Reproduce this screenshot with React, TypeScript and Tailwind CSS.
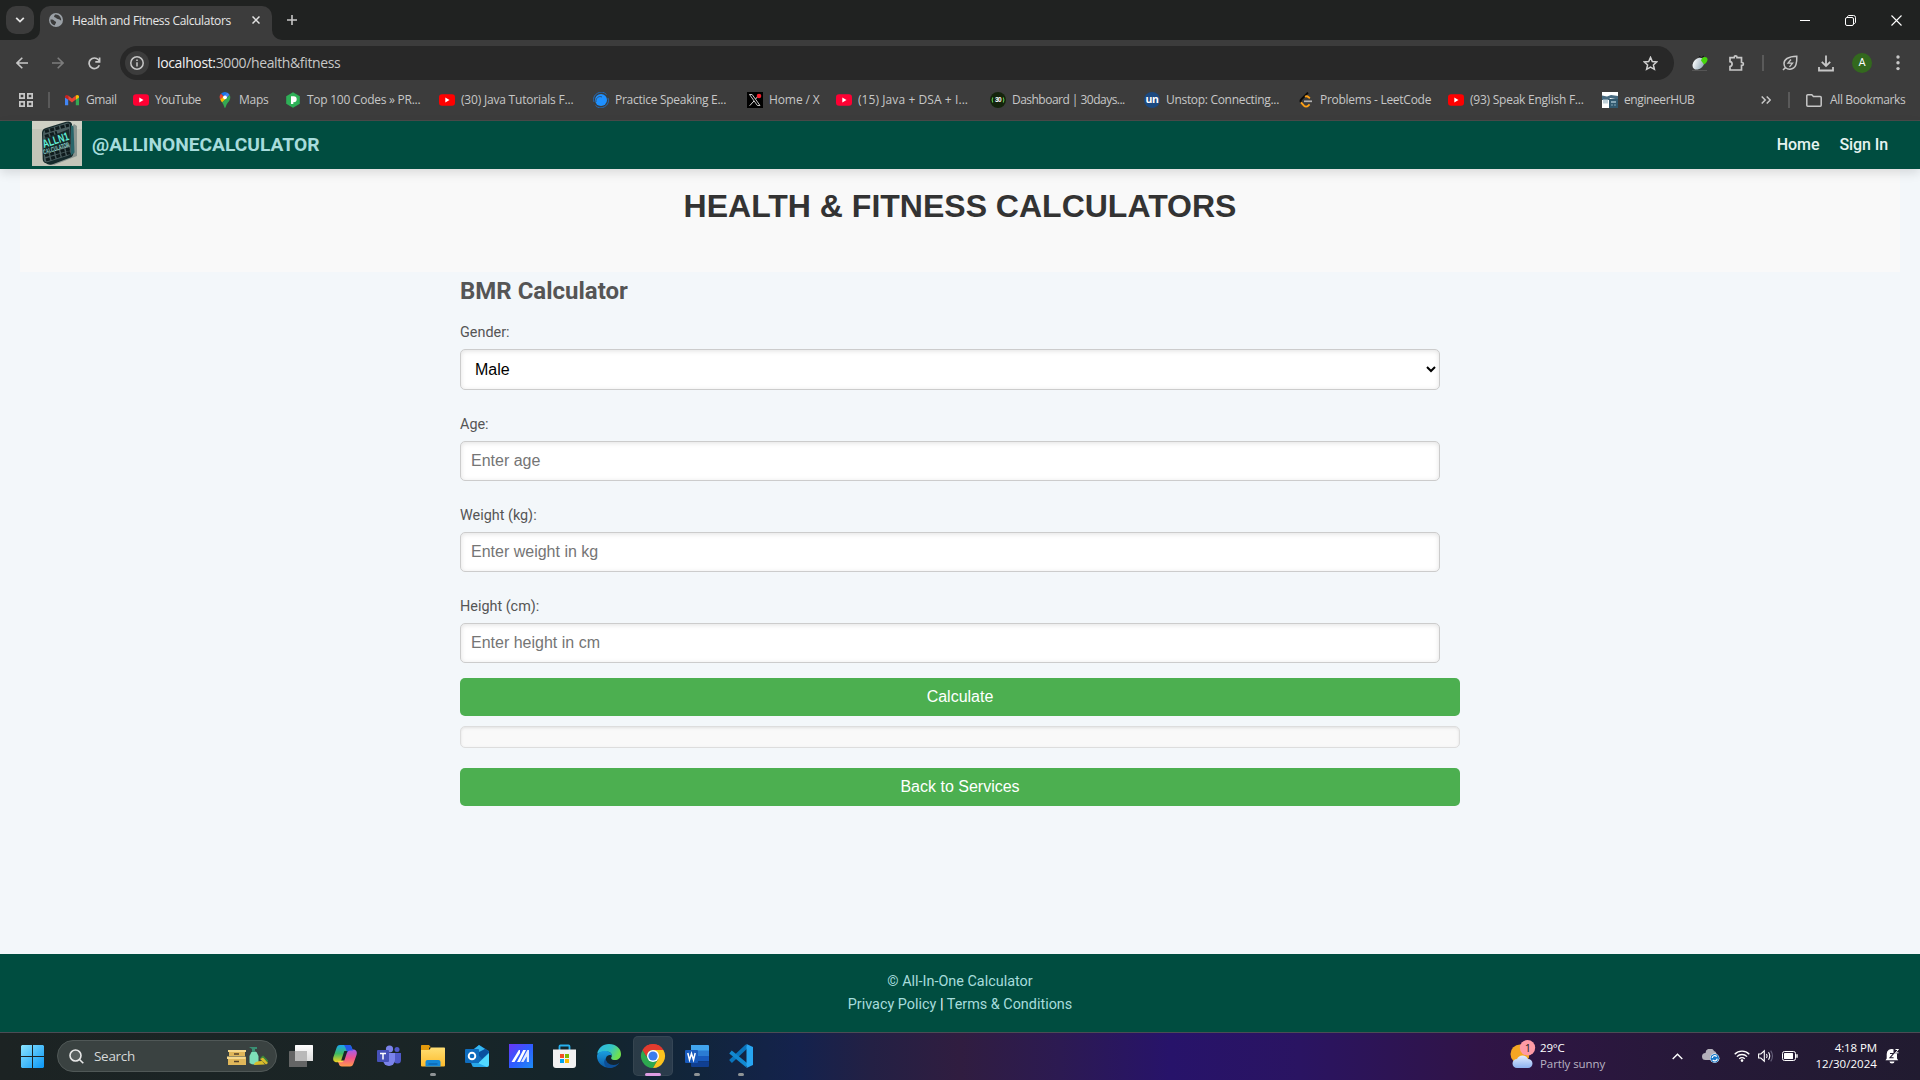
import React from "react";

const SEGOE = "font-['Open_Sans','Noto_Sans',sans-serif]";

const YouTube = ({ color = "#ff0033" }: { color?: string }) => (
  <svg width="16" height="16" viewBox="0 0 16 16">
    <rect y="2.2" width="16" height="11.6" rx="3" fill={color} />
    <path d="M6.3 5.6v4.8l4.2-2.4z" fill="#fff" />
  </svg>
);
const YouTubeRed = () => <YouTube color="#ff0000" />;

const Gmail = () => (
  <svg width="16" height="16" viewBox="0 0 16 16">
    <path d="M1 5v8.2h3.2V7.2z" fill="#4285f4" />
    <path d="M15 5v8.2h-3.2V7.2z" fill="#34a853" />
    <path d="M4.2 3.6 8 6.6l3.8-3v4L8 10.6l-3.8-3z" fill="#ea4335" />
    <path d="M11.8 3.6c1.4-1.2 3.2-.4 3.2 1.2v.6l-3.2 2.4z" fill="#fbbc04" />
    <path d="M4.2 3.6C2.8 2.400 1 3.200 1 4.800v.6l3.200 2.400z" fill="#c5221f" />
  </svg>
);

const MapsPin = () => (
  <svg width="16" height="16" viewBox="0 0 16 16">
    <path d="M8 0a5.300 5.300 0 0 0-4 1.800l3 2.600L10 .4A6 6 0 0 0 8 0z" fill="#1a73e8" />
    <path d="M4 1.800A5.300 5.300 0 0 0 3.200 7.600L6.500 4.200z" fill="#ea4335" />
    <path d="M10 .4 6.500 4.500l2.800 2.300 3.200-4A5.200 5.200 0 0 0 10 .4z" fill="#4285f4" />
    <path d="M3.200 7.600c.5 1 1.200 1.900 1.900 2.800L9.500 6.600 6.600 4.300z" fill="#fbbc04" />
    <path d="M12.700 2.900 5.100 10.600C7 13 7.200 16 8 16s1-3 2.900-5.400C12.400 8.700 14.300 6 12.700 2.900z" fill="#34a853" />
    <circle cx="8" cy="5.300" r="1.900" fill="#fff" />
  </svg>
);

const PrepCode = () => (
  <svg width="16" height="16" viewBox="0 0 16 16">
    <path d="M8 .3l6.800 3.900v7.600L8 15.700l-6.800-3.900V4.200z" fill="#2eb057" />
    <path d="M6 4.200h2.700a3 3 0 0 1 0 6H8.300v1.800H6z" fill="#fff" />
  </svg>
);

const Swirl = () => (
  <svg width="16" height="16" viewBox="0 0 16 16">
    <circle cx="8" cy="8" r="6" fill="#1e90ff" />
    <path d="M13.500 2.500A7.500 7.500 0 0 0 1 10M2.500 13.500A7.500 7.500 0 0 0 15 6" fill="none" stroke="#2369b5" strokeWidth="1" />
    <path d="M3 10C2.500 6 6 3.500 9 5" fill="none" stroke="#3c3c3c" strokeWidth=".7" />
  </svg>
);

const XLogo = () => (
  <svg width="16" height="16" viewBox="0 0 16 16">
    <rect width="16" height="16" fill="#000" />
    <path d="M2.500 2.500h2.600l7.900 11h-2.600z" fill="none" stroke="#ddd" strokeWidth=".9" />
    <path d="M12.500 2.500 8.600 7M7 9l-4.300 4.700" stroke="#ddd" strokeWidth="1" />
    <circle cx="12" cy="4" r="2.300" fill="#f4212e" />
  </svg>
);

const Days30 = () => (
  <svg width="16" height="16" viewBox="0 0 16 16">
    <circle cx="8" cy="8" r="8" fill="#14240c" />
    <path d="M2.800 5.500q-1.300 2.500 0 5M13.200 5.500q1.300 2.500 0 5" fill="none" stroke="#58b947" strokeWidth="1.200" />
    <text x="8" y="10.300" fontSize="6.500" fontWeight="700" textAnchor="middle" fill="#fff" fontFamily="Liberation Sans, sans-serif">30</text>
  </svg>
);

const Unstop = () => (
  <svg width="16" height="16" viewBox="0 0 16 16">
    <circle cx="8" cy="8" r="8" fill="#1c4980" />
    <text x="8" y="11" fontSize="10.500" fontWeight="700" textAnchor="middle" fill="#fff" fontFamily="Open Sans, sans-serif">un</text>
  </svg>
);

const LeetCode = () => (
  <svg width="16" height="16" viewBox="0 0 16 16" fill="none">
    <path d="M10 .6 3.200 7.500a2.200 2.200 0 0 0-.2 2.800" stroke="#0a0a0a" strokeWidth="1.900" />
    <path d="M3 10.300l2.900 3.300c1.200 1.300 3.200 1.300 4.400 0l1.300-1.300M7 4.800c1.200-.7 2.600-.5 3.600.4l1.200 1.200" stroke="#ffa116" strokeWidth="1.900" />
    <path d="M6 9.300h8" stroke="#b3b3b3" strokeWidth="1.700" />
  </svg>
);

const EngineerHub = () => (
  <svg width="16" height="16" viewBox="0 0 16 16">
    <rect width="16" height="16" fill="#fff" />
    <path d="M0 3.500l5 1 4-1.500 7 1v3.500L8 6l-1 2H0z" fill="#466a80" />
    <rect x="7" y="7" width="9" height="9" fill="#31596f" />
    <path d="M1 7.500h5v4H1z" fill="#bfd0d8" />
    <path d="M9 9h5v2H9zM9 12.500h2v1H9zM12 12.500h2v1h-2z" fill="#86a5b5" />
  </svg>
);

const bookmarks = [
  { w: "w-[69px]", t: "Gmail", ls: "tracking-[-0.400px]", I: Gmail },
  { w: "w-[84px]", t: "YouTube", ls: "tracking-[-0.500px]", I: YouTube },
  { w: "w-[68px]", t: "Maps", ls: "tracking-[-0.250px]", I: MapsPin },
  { w: "w-[154px]", t: "Top 100 Codes » PR...", ls: "tracking-[-0.260px]", I: PrepCode },
  { w: "w-[154px]", t: "(30) Java Tutorials F...", ls: "tracking-[-0.200px]", I: YouTubeRed },
  { w: "w-[154px]", t: "Practice Speaking E...", ls: "tracking-[-0.280px]", I: Swirl },
  { w: "w-[89px]", t: "Home / X", ls: "tracking-[-0.100px]", I: XLogo },
  { w: "w-[154px]", t: "(15) Java + DSA + I...", ls: "tracking-[0.080px]", I: YouTube },
  { w: "w-[154px]", t: "Dashboard | 30days...", ls: "tracking-[-0.520px]", I: Days30 },
  { w: "w-[154px]", t: "Unstop: Connecting...", ls: "tracking-[-0.310px]", I: Unstop },
  { w: "w-[150px]", t: "Problems - LeetCode", ls: "tracking-[-0.270px]", I: LeetCode },
  { w: "w-[154px]", t: "(93) Speak English F...", ls: "tracking-[-0.240px]", I: YouTubeRed },
  { w: "w-[100px]", t: "engineerHUB", ls: "tracking-[-0.400px]", I: EngineerHub },
];

const TabStrip = () => (
  <div className="flex h-10 shrink-0 items-start bg-[#202221]">
    <button className="mt-1.5 ml-1.5 grid h-7 w-7 place-items-center rounded-[10px] bg-[#3c3c3c]">
      <svg width="10" height="6" viewBox="0 0 10 6" fill="none" stroke="#e3e3e3" strokeWidth="1.800"><path d="M1.200 .8 5 4.600 8.800 .8" /></svg>
    </button>
    <div className="relative mt-1.5 ml-1.5 flex h-[34px] w-[232px] items-center rounded-t-[10px] bg-[#3c3c3c] pb-[6px] pl-[9px]">
      <svg className="absolute bottom-0 -left-2.5" width="10" height="10"><path d="M10 0v10H0A10 10 0 0 0 10 0z" fill="#3c3c3c" /></svg>
      <svg className="absolute -right-2.5 bottom-0" width="10" height="10"><path d="M0 0v10h10A10 10 0 0 1 0 0z" fill="#3c3c3c" /></svg>
      <svg width="14" height="14" viewBox="0 0 14 14">
        <circle cx="7" cy="7" r="7" fill="#9aa0a6" />
        <path d="M1.500 6.500c1.500-.3 3 .2 3.800 1.200.7.900 1.800.5 1.800 1.700 0 .9-1 1-1.200 2.800C3.200 12 1.200 9.500 1.500 6.500zM6 1.600c2.400-.3 4.400.8 5.500 2.800.6 1 .8 2 .6 3-1-.1-1.300-1.200-2.400-1.200-1.400 0-1.700-.6-2.600-1.200C6.200 4.400 5 4.300 5 3.300c0-.8 1-.8 1-1.700z" fill="#3c3c3c" />
      </svg>
      <span className={`mt-[2px] ml-[9px] text-[12px] tracking-[-0.330px] whitespace-nowrap text-[#e6e6e6] ${SEGOE}`}>Health and Fitness Calculators</span>
      <svg className="absolute top-[10px] left-[212px]" width="8" height="8" viewBox="0 0 8 8" stroke="#e3e3e3" strokeWidth="1.500"><path d="M.5 .5l7 7M7.500 .5l-7 7" /></svg>
    </div>
    <svg className="mt-[15px] ml-[15px]" width="10" height="10" stroke="#c7c7c7" strokeWidth="1.600"><path d="M5 0v10M0 5h10" /></svg>
    <div className="mr-[18px] ml-auto flex items-center gap-[35px] pt-[15px]">
      <svg width="10" height="11" stroke="#fff"><path d="M0 5.500h10" /></svg>
      <svg width="11" height="11" fill="none" stroke="#fff" viewBox="0 0 11 11"><rect x=".5" y="2.500" width="8" height="8" rx="1.500" /><path d="M2.500 2.500V2C2.500 1 3 .5 4 .5h4.500a2 2 0 0 1 2 2V7c0 1-.5 1.500-1.500 1.500h-.5" /></svg>
      <svg width="11" height="11" stroke="#fff" strokeWidth="1.100"><path d="M.5 .5l10 10M10.500 .5l-10 10" /></svg>
    </div>
  </div>
);

const Toolbar = () => (
  <div className="flex h-[46px] shrink-0 items-center bg-[#3c3c3c]">
    <svg className="ml-4" width="12" height="12" viewBox="0 0 12 12" fill="none" stroke="#c7c7c7" strokeWidth="1.600"><path d="M12 6H1M6.300 .700 1 6l5.300 5.300" /></svg>
    <svg className="ml-[24px]" width="12" height="12" viewBox="0 0 12 12" fill="none" stroke="#7c7c7c" strokeWidth="1.600"><path d="M0 6h11M5.700 .700 11 6l-5.300 5.300" /></svg>
    <svg className="ml-[24px]" width="13" height="13" viewBox="0 0 13 13" fill="none" stroke="#c7c7c7" strokeWidth="1.700"><path d="M11.300 8.300A5.300 5.300 0 1 1 10.400 2.800L11.500 4" /><path d="M11.600 .500v4.300H7.300" /></svg>
    <div className="ml-[19px] flex h-[34px] w-[1554px] items-center rounded-full bg-[#282828] pl-[5px]">
      <div className="grid h-6 w-6 place-items-center rounded-full bg-[#3c3c3c]">
        <svg width="14" height="14" fill="none" stroke="#c7c7c7" strokeWidth="1.500"><circle cx="7" cy="7" r="6.200" /><path d="M7 6.300V10.500M7 3.500V5" /></svg>
      </div>
      <span className={`-mt-px ml-2 text-[14px] tracking-[-0.370px] whitespace-nowrap text-[#c7c7c7] ${SEGOE}`}><span className="text-[#f1f1f1]">localhost:</span>3000/health&amp;fitness</span>
      <svg className="mr-[16px] ml-auto" width="15" height="15" viewBox="0 0 15 15" fill="none" stroke="#d0d0d0" strokeWidth="1.500"><path d="M7.500 1.400l1.800 4.100 4.500.4-3.400 3 1 4.400-3.900-2.300-3.900 2.300 1-4.400-3.400-3 4.500-.4z" /></svg>
    </div>
    <svg className="ml-[18px]" width="16" height="16" viewBox="0 0 16 16">
      <defs><linearGradient id="mouse" x1=".2" x2=".8" y2="1"><stop stopColor="#fff" /><stop offset="1" stopColor="#8fa6b4" /></linearGradient></defs>
      <ellipse cx="6.500" cy="8.600" rx="6.800" ry="5" transform="rotate(-45 6.500 8.600)" fill="url(#mouse)" />
      <path d="M10 3c3-2 6-.500 5.500 2-.5 2-2 3.500-3.500 4.500L9 5.500z" fill="#46d60c" />
      <path d="M7 1.500l2.500 1L12 1" stroke="#111" fill="none" />
      <path d="M0 15.500h15" stroke="#555" />
    </svg>
    <svg className="ml-5" width="17" height="17" viewBox="0 0 17 17" fill="none" stroke="#c7c7c7" strokeWidth="1.700"><path d="M2 2.700h4.200V2.300a1.400 1.400 0 0 1 2.800 0v.4h4.500V7.500h.5a1.400 1.400 0 0 1 0 2.800h-.500v4.700H2v-3.500c2.800-.2 2.800-4.600 0-4.800z" /></svg>
    <div className="ml-[17px] h-4 w-0.5 bg-[#5a5a5a]" />
    <svg className="ml-[18px]" width="16" height="16" viewBox="0 0 16 16" fill="none" stroke="#c7c7c7" strokeWidth="1.500"><path d="M14.800 1.200C15 7 14.500 14 8 14.200 4.500 14.300 2 12 2 8.500 2 3 8 1.500 14.800 1.200zM1 15l2.600-2.600" /><path d="M9 4.500 6 8.200h4.500L7.500 11.800" strokeWidth="1.300" /></svg>
    <svg className="ml-[20px]" width="16" height="17" viewBox="0 0 16 17" fill="none" stroke="#c7c7c7" strokeWidth="1.800"><path d="M8 .500v10M3.800 6.800 8 11l4.200-4.200M1 12v3.500h14V12" /></svg>
    <div className="ml-[18px] grid h-5 w-5 place-items-center rounded-full bg-[#33691e] font-['Roboto',sans-serif] text-[11px] text-white">A</div>
    <svg className="ml-[24px]" width="4" height="16" fill="#c7c7c7"><circle cx="2" cy="2" r="1.700" /><circle cx="2" cy="7.800" r="1.700" /><circle cx="2" cy="13.600" r="1.700" /></svg>
  </div>
);

const Bookmarks = () => (
  <div className={`flex h-[35px] shrink-0 items-center border-b border-[#4a4a4a] bg-[#3c3c3c] pb-[6px] text-[12px] text-[#c7c7c7] ${SEGOE}`}>
    <svg className="ml-[19px]" width="14" height="14" fill="none" stroke="#c7c7c7" strokeWidth="1.700"><path d="M.850 .850h4.300v4.300H.850zM8.850 .850h4.300v4.300h-4.300zM.850 8.850h4.300v4.300H.850zM8.850 8.850h4.300v4.300h-4.300z" /></svg>
    <div className="mr-[14px] ml-[15px] h-4 w-0.5 bg-[#5a5a5a]" />
    {bookmarks.map(({ w, t, ls, I }) => (
      <div key={t} className={`flex shrink-0 items-center gap-1.5 whitespace-nowrap ${w} ${ls}`}><I /><span>{t}</span></div>
    ))}
    <svg className="ml-[59px]" width="10" height="8" viewBox="0 0 10 8" fill="none" stroke="#c7c7c7" strokeWidth="1.500"><path d="M.700 .500 4.200 4 .700 7.500M5.700 .500 9.200 4 5.700 7.500" /></svg>
    <div className="ml-[17px] h-4 w-0.5 bg-[#5a5a5a]" />
    <svg className="ml-4" width="16" height="13" viewBox="0 0 16 13" fill="none" stroke="#c7c7c7" strokeWidth="1.500"><path d="M.800 1.800a1 1 0 0 1 1-1h4l1.600 1.700h6.800a1 1 0 0 1 1 1v7.700a1 1 0 0 1-1 1H1.800a1 1 0 0 1-1-1z" /></svg>
    <span className="ml-2 tracking-[-0.360px] whitespace-nowrap">All Bookmarks</span>
  </div>
);

const Logo = () => (
  <svg width="50" height="45" viewBox="0 0 50 45" className="overflow-visible">
    <rect width="50" height="45" fill="#c3c5b9" />
    <rect width="50" height="8" fill="#cfd0c5" />
    <path d="M42 3l3 2v30L22 44l-8-2z" fill="#8a9590" />
    <path d="M10 12q0-4 4-5L34 .8q5-1.200 6 2.500l1.500 28q0 4-3 5.200L20 43.500q-4 .8-6-1.200-3.200-1-3.300-4z" fill="#15292b" />
    <path d="M11 13q0-4 4-5L34 2q4-1 4 3l1 25q0 4-4 5L16 41q-4 1-4-3z" fill="#4a5d5f" />
    <path d="M39 4l2.500 1.500 1 26-3.500 3z" fill="#27656a" />
    <g stroke="#0f1b1d" strokeWidth="3.200" strokeDasharray="4 1.400"><path d="M13 10.500 37 4M13 15.500l12-4M13 34.500l26-7M14 39l24-7.500" /></g>
    <path d="M12 18 37 8l1.500 15L12 34z" fill="#17282a" />
    <g fontFamily="Liberation Sans, sans-serif" fontWeight="700">
      <text x="12" y="27" fontSize="11.500" fill="#62f0d9" textLength="27" lengthAdjust="spacingAndGlyphs" transform="rotate(-18 12 27)">ALLN1</text>
      <text x="12" y="33.500" fontSize="7" fill="#8ccfc5" textLength="27" lengthAdjust="spacingAndGlyphs" transform="rotate(-17 12 33.500)">CALCULATOR</text>
    </g>
  </svg>
);

const fieldBox = "block w-[980px] rounded-[5px] border border-[#ccc] bg-white font-['Liberation_Sans',Arial,sans-serif] text-[16px] shadow-[inset_0_1px_5px_rgba(0,0,0,0.12)] outline-none";
const labelBox = "block font-['Roboto',sans-serif] text-[14.400px] leading-[18px] text-[#555]";
const buttonBox = "block h-[38px] w-full rounded-[5px] bg-[#4caf50] font-['Liberation_Sans',Arial,sans-serif] text-[16px] leading-[38px] text-white";

const Field = ({ label, hint }: { label: string; hint: string }) => (
  <div className="mt-[26px]">
    <label className={labelBox}>{label}</label>
    <input placeholder={hint} className={`mt-[7px] h-[40px] px-2.5 placeholder:text-[#757575] ${fieldBox}`} />
  </div>
);

const WebPage = () => (
  <main className="flex h-[911px] shrink-0 flex-col bg-[#f3f7fa]">
    <header className="z-10 flex h-12 shrink-0 items-start bg-[#004d40] pl-8 font-['Roboto',sans-serif] shadow-[0_4px_10px_rgba(0,0,0,0.12)]">
      <Logo />
      <span className="ml-[10px] text-[19.200px] leading-[47px] font-bold text-[#a7dcdc]">@ALLINONECALCULATOR</span>
      <nav className="mr-8 ml-auto flex gap-5 text-[16px] leading-[47px] font-medium tracking-[-0.080px] text-[#e6f3f0]">
        <a>Home</a>
        <a>Sign In</a>
      </nav>
    </header>
    <section className="mx-5 h-[103px] shrink-0 bg-[#f9f9f9] pt-[18px] text-center">
      <h1 className="font-['Liberation_Sans',Arial,sans-serif] text-[32px] leading-[38px] font-bold text-[#333]">HEALTH &amp; FITNESS CALCULATORS</h1>
    </section>
    <section className="mx-auto flex w-[1000px] grow flex-col">
      <h2 className="mt-[4px] font-['Roboto',sans-serif] text-[24px] leading-[30px] font-bold text-[#555]">BMR Calculator</h2>
      <label className={`mt-[18px] ${labelBox}`}>Gender:</label>
      <select className={`mt-[7px] h-[41px] px-2.5 text-black ${fieldBox}`}><option>Male</option></select>
      <Field label="Age:" hint="Enter age" />
      <Field label="Weight (kg):" hint="Enter weight in kg" />
      <Field label="Height (cm):" hint="Enter height in cm" />
      <button className={`mt-[15px] ${buttonBox}`}>Calculate</button>
      <div className="mt-[10px] h-[22px] rounded-[5px] border border-[#ddd] bg-[#f9f9f9] shadow-[inset_0_1px_3px_rgba(0,0,0,0.1)]" />
      <button className={`mt-[20px] ${buttonBox}`}>Back to Services</button>
    </section>
    <footer className="h-[78px] shrink-0 bg-[#004d40] pt-[16px] text-center font-['Roboto',sans-serif] text-[14.400px] leading-[23px] text-[#a7dcdc]">
      <p>© All-In-One Calculator</p>
      <p>Privacy Policy <span className="text-white">|</span> Terms &amp; Conditions</p>
    </footer>
  </main>
);

const apps: { name: string; dot?: string; active?: boolean; art: React.ReactNode }[] = [
  { name: "taskview", art: <><defs><linearGradient id="tv" x2="0" y2="1"><stop stopColor="#fff" /><stop offset="1" stopColor="#dcdcdc" /></linearGradient></defs><rect x="6" y="1" width="18" height="16" rx=".5" fill="url(#tv)" /><rect y="7" width="18" height="16" rx=".5" fill="#6e6e6e" fillOpacity=".88" /><rect x="6" y="7" width="12" height="10" fill="#b9b9b9" /></> },
  { name: "copilot", art: <><defs><linearGradient id="ca" x2="0" y2="1"><stop stopColor="#1aa5f0" /><stop offset=".5" stopColor="#3dbb63" /><stop offset="1" stopColor="#f5d21e" /></linearGradient><linearGradient id="cb" x2="0" y2="1"><stop stopColor="#a25ef0" /><stop offset=".5" stopColor="#f0528e" /><stop offset="1" stopColor="#ff9a4a" /></linearGradient></defs><path d="M7 1h9c2 0 2.500 1.500 3 3l.800 2.500h-2.500c-2 0-2.800 1-3.300 2.800L11.500 16c-.5 1.500-1.500 2.300-3 2.300H4c-3.500 0-4.500-2.500-3.500-5.500L3.500 4C4.200 2 5 1 7 1z" fill="url(#ca)" /><path d="M17 22.500H9c-2 0-2.800-1-3.300-3L5 17h2.800c1.800 0 2.500-1 3-2.500l2.500-7c.5-1.300 1.500-2 3-2H20c3.500 0 4.500 2.500 3.500 5.500l-3 8.500c-.7 2-1.500 3-3.500 3z" fill="url(#cb)" /><path d="M11 1h5c2 0 2.500 1.500 3 3l.8 2.500h-2.500c-2 0-2.800 1-3.300 2.800C13 5 12.500 3 11 1z" fill="#2456e8" /><path d="M13.500 8.500 10.500 17c-.5 1-1 1.300-2 1.300H5l.2-1.300h2.600c1.800 0 2.500-1 3-2.500z" fill="#ffd54a" /><path d="M11.300 7h3.200l-3.200 9.500H8.200z" fill="#182626" /></> },
  { name: "teams", art: <><circle cx="12.500" cy="5" r="3.600" fill="#7b83eb" /><circle cx="20" cy="5.500" r="2.500" fill="#5059c9" /><path d="M17 9h7v7a3.500 3.500 0 0 1-7 0z" fill="#5059c9" /><path d="M6 9h12v7a6 6 0 0 1-12 0z" fill="#7b83eb" /><rect y="6" width="12" height="12" rx="1" fill="#4651b8" /><path d="M3 9.500h6M6 9.500v6" stroke="#fff" strokeWidth="1.500" /></> },
  { name: "explorer", dot: "y", art: <><defs><linearGradient id="fe" x2="0" y2="1"><stop stopColor="#ffdf73" /><stop offset="1" stopColor="#fdbb2c" /></linearGradient></defs><path d="M0 2c0-.6.400-1 1-1h7l2 2.500h-2V7H0z" fill="#e39a0c" /><path d="M0 6h8l2.200-2.500H23c.600 0 1 .4 1 1V21.500a1 1 0 0 1-1 1H1a1 1 0 0 1-1-1z" fill="url(#fe)" /><path d="M4.500 22.500V18a2 2 0 0 1 2-2h11a2 2 0 0 1 2 2v4.500z" fill="#1488d8" /><path d="M7.500 20h9" stroke="#0b64ad" strokeWidth="1.300" /></> },
  { name: "outlook", art: <><path d="M6 7 14 1l10 6v13l-2 3H10l-4-3z" fill="#1066b5" /><path d="M8 6l6-5 6 4-5 4z" fill="#35b8f1" /><path d="M12 9l8-4 4 3-7 7z" fill="#0a4f9e" /><path d="M24 9v12a2 2 0 0 1-2 2H9z" fill="#50d9ff" /><path d="M6 16l16 7H9a2 2 0 0 1-2-2z" fill="#28a8ea" /><rect y="5" width="14" height="14" rx="1" fill="#0f6cbd" /><circle cx="7" cy="12" r="3.300" fill="none" stroke="#fff" strokeWidth="1.900" /></> },
  { name: "myasus", art: <><defs><linearGradient id="ma" x2="1" y2="1"><stop stopColor="#6a35f5" /><stop offset=".5" stopColor="#2f5bff" /><stop offset="1" stopColor="#1c8df5" /></linearGradient></defs><rect width="24" height="24" fill="url(#ma)" /><path d="M2.500 18h3l5.500-9V6H9.800zM8 18h3l6-12h-2.800z" fill="#fff" /><path d="M12 18h2.500l3.300-5.500V18H20V6h-1.600z" fill="#e3eaff" /></> },
  { name: "store", art: <><path d="M6.500 6V2.500c0-.5.300-1 1-1h8c.7 0 1 .5 1 1V6" fill="none" stroke="#27b0ee" strokeWidth="1.800" /><path d="M0 5.500h23V21a3 3 0 0 1-3 3H3a3 3 0 0 1-3-3z" fill="#f2f2f2" /><path d="M7 10h4v4H7z" fill="#f25022" /><path d="M12 10h4v4h-4z" fill="#7fba00" /><path d="M7 15h4v4H7z" fill="#00a4ef" /><path d="M12 15h4v4h-4z" fill="#ffb900" /></> },
  { name: "edge", art: <><defs><linearGradient id="ea" x2="1" y2=".4"><stop stopColor="#2bb7e8" /><stop offset=".6" stopColor="#35c5c4" /><stop offset="1" stopColor="#6fe04f" /></linearGradient><linearGradient id="eb" x2="0" y2="1"><stop stopColor="#1a9fe0" /><stop offset="1" stopColor="#0c59a4" /></linearGradient></defs><path d="M.2 10C1 4 6 0 12 0c7 0 12 4.500 12 10 0 4-3 6-6 6-3.500 0-4.500-1.500-3.500-3C15.800 11 14 7.500 9.500 7.500 5 7.500 1 9 .2 10z" fill="url(#ea)" /><path d="M0 12C0 9 4 7 8 7c4.500 0 7 2.500 7 5-1-1.500-5-1.500-6 2-1 4 3 8.500 7 9.300C8 25.500 0 20 0 12z" fill="url(#eb)" /><path d="M9 14c-.8 4 3.500 7 7.500 7 3 0 5-1.500 6-2.500C21 21.500 17 24 13 24c-5 0-8-6-4-10z" fill="#0d4f96" /></> },
  { name: "chrome", active: true, art: <><path d="M12 12 1.600 6A12 12 0 0 1 22.400 6z" fill="#e33b2e" /><path d="M1.600 6A12 12 0 0 0 12 24l5.200-9L6.800 15z" fill="#2da94f" /><path d="M22.400 6A12 12 0 0 1 12 24l5.200-9L12 6z" fill="#fcc31e" /><path d="M1.600 6l5.200 9h5V6z" fill="#2da94f" /><path d="M1.600 6A12 12 0 0 1 22.400 6H12a6 6 0 0 0-5.200 3.200L5.500 12.500z" fill="#e33b2e" /><circle cx="12" cy="12" r="6" fill="#fff" /><circle cx="12" cy="12" r="4.600" fill="#3b7ded" /></> },
  { name: "word", dot: "y", art: <><path d="M6 1h17a1 1 0 0 1 1 1v5H6z" fill="#41a5ee" /><path d="M6 6.500h18V12H6z" fill="#2b7cd3" /><path d="M6 12h18v5.300H6z" fill="#185abd" /><path d="M6 17.300h18V22a1 1 0 0 1-1 1H7a1 1 0 0 1-1-1z" fill="#103f91" /><rect y="6" width="13" height="13" rx="1" fill="#185abd" /><path d="M2.800 9l1.700 7 2-6.500 2 6.500 1.700-7" fill="none" stroke="#fff" strokeWidth="1.500" /></> },
  { name: "vscode", dot: "y", art: <><path d="M1.500 17.500 18 2" stroke="#0a74bd" strokeWidth="4" /><path d="M1.500 8 18 21.500" stroke="#1288d0" strokeWidth="4" /><path d="M17.500 0 24 3v18l-6.500 3z" fill="#27a5f2" /></> },
];

const Taskbar = () => (
  <div className={`flex h-12 shrink-0 items-center border-t border-[#4b4c55] bg-[linear-gradient(90deg,#1c2323_0px,#1a2526_400px,#14252b_580px,#11253c_700px,#14224d_800px,#232044_870px,#301d40_960px,#2c1a52_1060px,#27136a_1170px,#2a1462_1300px,#301446_1480px,#261938_1700px,#211b30_1920px)] pb-px text-white ${SEGOE}`}>
    <svg className="ml-[21px]" width="23" height="23" viewBox="0 0 23 23">
      <defs><linearGradient id="win" x2="1" y2="1"><stop stopColor="#8ae4ff" /><stop offset="1" stopColor="#0a96f5" /></linearGradient></defs>
      <path d="M1 0h10v11H0V1zM12 0h10l1 1v10H12zM0 12h11v11H1l-1-1zM12 12h11v10l-1 1H12z" fill="url(#win)" />
    </svg>
    <div className="ml-[13px] flex h-8 w-[220px] items-center rounded-full border border-[#505857] bg-[#3a4241] pl-[11px]">
      <svg width="15" height="15" fill="#59605f" stroke="#e8e8e8" strokeWidth="1.600"><circle cx="6.500" cy="6.500" r="5.500" /><path d="M10.500 10.500 14.300 14.300" /></svg>
      <span className="ml-[10px] text-[13.500px] tracking-[-0.300px] text-[#d5d8d8]">Search</span>
      <svg className="mr-2 ml-auto" width="41" height="20" viewBox="0 0 41 20">
        <path d="M2 4h16v6H2zM1 11h18v8H1z" fill="#e0b75a" /><path d="M1 4h18v2H1zM0 10.500h18.500V13H0z" fill="#f6d98c" /><path d="M7 8h5M7 15.500h5" stroke="#55422a" strokeWidth="1.500" />
        <path d="M24 7c0-2 6-2 6 0l1.500 3v7q-4.500 3-9 0v-7z" fill="#7edfb9" /><path d="M22 1h8v2h-2v3h-3V3z" fill="#3a8f73" />
        <path d="M27 19q0-4 8-4l3 3.500zM33 13l3-2 5 6-2 1.500z" fill="#d9bd2b" /><path d="M34 12l2-1.500 5 5" stroke="#3c8d3a" strokeWidth="1.500" fill="none" />
      </svg>
    </div>
    <div className="ml-1 flex gap-1">
      {apps.map((a) => (
        <div key={a.name} className={`relative grid h-10 w-10 place-items-center rounded-[5px] ${a.active ? "bg-white/10 ring-1 ring-white/5 ring-inset" : ""}`}>
          <svg width="24" height="24" viewBox="0 0 24 24" className="overflow-visible">{a.art}</svg>
          {a.dot && <i className="absolute bottom-0 left-[17px] h-[3px] w-1.5 rounded-full bg-[#8f9496]" />}
          {a.active && <i className="absolute bottom-0 left-3 h-[3px] w-4 rounded-full bg-[#df9de3]" />}
        </div>
      ))}
    </div>
    <div className="ml-[749px] flex w-[26px] shrink-0 items-center">
      <svg width="26" height="32" viewBox="0 0 26 32">
        <defs><linearGradient id="cl" x2="0" y2="1"><stop stopColor="#e6efff" /><stop offset="1" stopColor="#8cb2f0" /></linearGradient></defs>
        <circle cx="10" cy="14" r="9.500" fill="#f5a623" />
        <path d="M7 28a4.500 4.500 0 0 1 0-9 6 6 0 0 1 11 0 4.500 4.500 0 0 1 0 9z" fill="url(#cl)" />
        <circle cx="17.500" cy="7.700" r="7.700" fill="#ff9aa5" />
        <text x="18" y="11.500" fontSize="11" textAnchor="middle" fill="#222" fontFamily="Open Sans, sans-serif">1</text>
      </svg>
    </div>
    <div className="ml-[4px] w-[80px] shrink-0 text-[11.500px] leading-4 whitespace-nowrap">
      <p className="tracking-[-0.200px]">29°C</p>
      <p className="tracking-[-0.080px] text-[#b9b3c2]">Partly sunny</p>
    </div>
    <svg className="ml-[52px] shrink-0" width="11" height="7" fill="none" stroke="#fff" strokeWidth="1.400"><path d="M.700 6 5.500 1.200 10.300 6" /></svg>
    <svg className="ml-[19px] shrink-0" width="18" height="14" viewBox="0 0 18 14"><path d="M3.500 11a3.500 3.500 0 0 1 0-7 4.500 4.500 0 0 1 8.500-2 3.500 3.500 0 0 1 2.500 3L8 11z" fill="#b4b0ba" /><circle cx="12.700" cy="9.300" r="4.700" fill="#fff" /><circle cx="12.700" cy="9.300" r="4.200" fill="#1677c9" /><path d="M10.200 9a2.500 2.500 0 0 1 4.500-1.300M15.200 9.600a2.500 2.500 0 0 1-4.500 1.300" stroke="#fff" strokeWidth="1.200" fill="none" /></svg>
    <svg className="ml-[14px] shrink-0" width="16" height="12" viewBox="0 0 16 12" fill="none" stroke="#fff" strokeWidth="1.300"><path d="M.700 4.200a10.300 10.300 0 0 1 14.600 0M2.900 6.600a7.200 7.200 0 0 1 10.200 0M5.200 8.900a4 4 0 0 1 5.600 0" /><circle cx="8" cy="10.600" r="1.300" fill="#fff" stroke="none" /></svg>
    <svg className="ml-[8px] shrink-0" width="16" height="14" viewBox="0 0 16 14" fill="none" stroke="#fff" strokeWidth="1.100"><path d="M.600 5v4h2.200L6.300 12.200V1.800L2.800 5z" /><path d="M8.500 5q1.300 2 0 4M10.500 3.300q2.500 3.700 0 7.400" /><path d="M12.700 1.600q3.500 5.400 0 10.800" stroke="#66607a" /></svg>
    <svg className="ml-[8px] shrink-0" width="16" height="10" viewBox="0 0 16 10" fill="none" stroke="#fff"><rect x=".500" y=".500" width="13" height="9" rx="2" /><rect x="2" y="2" width="9" height="6" rx=".500" fill="#fff" stroke="none" /><path d="M15 3.300v3.400" strokeWidth="1.400" /></svg>
    <div className="ml-auto text-right text-[11.500px] leading-4 whitespace-nowrap">
      <p className="tracking-[-0.100px]">4:18 PM</p>
      <p className="tracking-[0.050px]">12/30/2024</p>
    </div>
    <svg className="mr-[20px] ml-[8px] shrink-0" width="15" height="16" viewBox="0 0 15 16"><path d="M1.700 10.500V6A5 5 0 0 1 8.500 1.300V5l3.500.5v5l1.200 1.800H.500zM4.500 13.500h5a2.500 2 0 0 1-5 0z" fill="#fff" /><path d="M10.500 1.500h3L10.500 4.800h3" stroke="#fff" fill="none" strokeWidth="1" /><path d="M5 5.500h3.600L5 9.700h3.600" stroke="#211b30" fill="none" strokeWidth="1.100" /></svg>
  </div>
);

export default function App() {
  return (
    <div className="flex h-[1080px] w-[1920px] flex-col overflow-hidden">
      <TabStrip />
      <Toolbar />
      <Bookmarks />
      <WebPage />
      <Taskbar />
    </div>
  );
}
